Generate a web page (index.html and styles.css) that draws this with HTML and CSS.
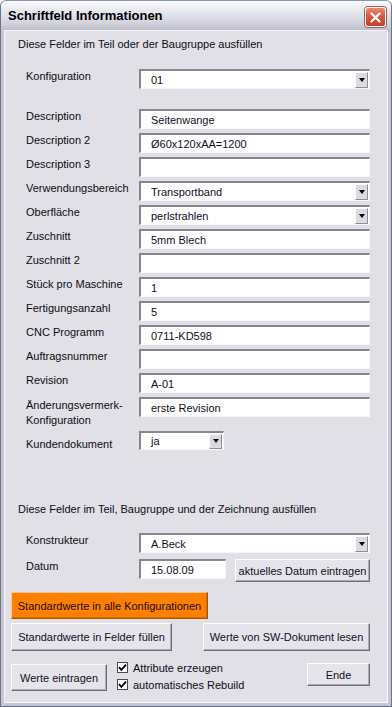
FILE: index.html
```html
<!DOCTYPE html>
<html lang="de">
<head>
  <meta charset="UTF-8" />
  <title>Schriftfeld Informationen</title>
  <link rel="stylesheet" href="styles.css">
</head>
<body>
  <div class="window">
    <!-- Title bar -->
    <div class="titlebar">
      <span class="title">Schriftfeld Informationen</span>
      <span class="close">
        <svg width="11" height="11" viewBox="0 0 11 11"><path d="M1.5 1.5 L9.5 9.5 M9.5 1.5 L1.5 9.5" stroke="#fff" stroke-width="2.2" stroke-linecap="round"/></svg>
      </span>
    </div>

    <div class="client">
      <p class="hint">Diese Felder im Teil oder der Baugruppe ausfüllen</p>

      <div class="row row-config">
        <span class="label">Konfiguration</span>
        <div class="field combo"><span class="val">01</span><span class="drop"></span></div>
      </div>

      <div class="fields">
        <div class="row"><span class="label">Description</span><div class="field"><span class="val">Seitenwange</span></div></div>
        <div class="row"><span class="label">Description 2</span><div class="field"><span class="val">Ø60x120xAA=1200</span></div></div>
        <div class="row"><span class="label">Description 3</span><div class="field"></div></div>
        <div class="row"><span class="label">Verwendungsbereich</span><div class="field combo"><span class="val">Transportband</span><span class="drop"></span></div></div>
        <div class="row"><span class="label">Oberfläche</span><div class="field combo"><span class="val">perlstrahlen</span><span class="drop"></span></div></div>
        <div class="row"><span class="label">Zuschnitt</span><div class="field"><span class="val">5mm Blech</span></div></div>
        <div class="row"><span class="label">Zuschnitt 2</span><div class="field"></div></div>
        <div class="row"><span class="label">Stück pro Maschine</span><div class="field"><span class="val">1</span></div></div>
        <div class="row"><span class="label">Fertigungsanzahl</span><div class="field"><span class="val">5</span></div></div>
        <div class="row"><span class="label">CNC Programm</span><div class="field"><span class="val">0711-KD598</span></div></div>
        <div class="row"><span class="label">Auftragsnummer</span><div class="field"></div></div>
        <div class="row"><span class="label">Revision</span><div class="field"><span class="val">A-01</span></div></div>
        <div class="row"><span class="label two-line">Änderungsvermerk-<br>Konfiguration</span><div class="field"><span class="val">erste Revision</span></div></div>
      </div>

      <div class="row row-kunde">
        <span class="label">Kundendokument</span>
        <div class="field combo small"><span class="val">ja</span><span class="drop"></span></div>
      </div>

      <p class="hint hint-2">Diese Felder im Teil, Baugruppe und der Zeichnung ausfüllen</p>

      <div class="row row-konstr">
        <span class="label">Konstrukteur</span>
        <div class="field combo"><span class="val">A.Beck</span><span class="drop"></span></div>
      </div>
      <div class="row row-datum">
        <span class="label">Datum</span>
        <div class="field date"><span class="val">15.08.09</span></div>
        <button class="btn btn-today">aktuelles Datum eintragen</button>
      </div>

      <div class="buttons">
        <button class="btn btn-orange">Standardwerte in alle Konfigurationen</button>
        <div class="btn-row">
          <button class="btn btn-fill">Standardwerte in Felder füllen</button>
          <button class="btn btn-read">Werte von SW-Dokument lesen</button>
        </div>
        <div class="btn-row last">
          <button class="btn btn-write">Werte eintragen</button>
          <div class="checks">
            <div class="check"><span class="box"><svg width="9" height="9" viewBox="0 0 9 9"><path d="M1 4.2 L3.4 6.8 L8 1.6" fill="none" stroke="#000" stroke-width="1.8"/></svg></span>Attribute erzeugen</div>
            <div class="check"><span class="box"><svg width="9" height="9" viewBox="0 0 9 9"><path d="M1 4.2 L3.4 6.8 L8 1.6" fill="none" stroke="#000" stroke-width="1.8"/></svg></span>automatisches Rebuild</div>
          </div>
          <button class="btn btn-end">Ende</button>
        </div>
      </div>
    </div>
  </div>
</body>
</html>
```

FILE: styles.css
```css
/* ─── XP silver style dialog ─────────────────────────── */
:root {
  --face: #e1e0e7;
  --frame: #c6c6d2;
  --dark: #6f6f78;
  --sunken: #85858e;
}
* { box-sizing: border-box; }
html, body { margin: 0; }
body {
  background: #fff;
  font-family: "Liberation Sans", Arial, sans-serif;
  font-size: 11px;
  color: #0c0c14;
}

.window {
  width: 392px;
  height: 707px;
  display: flex;
  flex-direction: column;
  background: var(--frame);
  border: 1px solid #6d7488;
  border-top-color: #8796bf;
  border-radius: 6px 6px 0 0;
  overflow: hidden;
}

/* ── Title bar ─────────────────────────────── */
.titlebar {
  height: 29px;
  flex: none;
  display: flex;
  align-items: center;
  padding: 0 5px 0 7px;
  background: linear-gradient(to bottom, #fbfbfd 0%, #efeff4 20%, #dedee8 55%, #cdcdd9 85%, #bdbdcb 100%);
}
.title {
  font-size: 13px;
  font-weight: bold;
  color: #000;
  flex: 1;
}
.close {
  width: 21px;
  height: 20px;
  margin-top: 3px;
  display: flex;
  align-items: center;
  justify-content: center;
  border: 1px solid #fff;
  border-radius: 3px;
  background: linear-gradient(to bottom, #ea8a74, #d4553c 55%, #c2412b);
  box-shadow: 0 0 0 1px #b65a4c;
}

/* ── Client area ─────────────────────────────── */
.client {
  flex: 1;
  margin: 0 3px 3px;
  background: var(--face);
  box-shadow: inset 1px 1px 0 #f6f6fa, inset -1px -1px 0 #fbfbfd;
  padding-top: 8px;
}

.hint {
  margin: 0 0 0 14px;
  line-height: 13px;
}
.hint-2 { margin-top: 52px; }

.row {
  display: flex;
  align-items: flex-start;
  margin-left: 22px;
}
.label {
  width: 113px;
  flex: none;
  padding-top: 1px;
  line-height: 13px;
}
.label.two-line { line-height: 15px; padding-bottom: 1px; }

.row-config { margin-top: 18px; }
.fields { margin-top: 20px; display: flex; flex-direction: column; gap: 4px; }
.row-kunde { margin-top: 2px; }
.row-kunde .label { padding-top: 7px; }
.row-konstr { margin-top: 17px; }
.row-datum { margin-top: 6px; }

/* sunken text field */
.field {
  width: 231px;
  height: 20px;
  display: flex;
  align-items: center;
  background: #fff;
  border-style: solid;
  border-width: 2px 1px 1px 2px;
  border-color: var(--sunken) #f7f7f7 #f7f7f7 var(--sunken);
  padding-left: 10px;
  color: #10101c;
}
.field .val { flex: 1; white-space: nowrap; }
.field.small { width: 85px; height: 19px; }
.field.date { width: 87px; }

.drop {
  width: 13px;
  height: 16px;
  flex: none;
  margin-right: 1px;
  display: flex;
  align-items: center;
  justify-content: center;
  background: #dcdbe3;
  border: 1px solid;
  border-color: #fbfbfd #8e8e98 #8e8e98 #fbfbfd;
}
.drop::after {
  content: "";
  border-left: 3.5px solid transparent;
  border-right: 3.5px solid transparent;
  border-top: 4px solid #000;
}
.field.small .drop { height: 15px; }

/* raised button */
.btn {
  font-family: inherit;
  font-size: 11px;
  color: #10101c;
  padding: 0;
  display: flex;
  align-items: center;
  justify-content: center;
  background: #e5e4eb;
  border: 1px solid;
  border-color: #fdfdfe var(--dark) var(--dark) #fdfdfe;
  box-shadow: inset -1px -1px 0 #a9a9b3;
  white-space: nowrap;
}
.btn-today { width: 135px; height: 23px; margin-left: 9px; }

.buttons {
  margin: 10px 0 0 7px;
  display: flex;
  flex-direction: column;
}
.btn-orange {
  width: 197px;
  height: 27px;
  background: #ff8000;
  border-color: #ffc78f #a85400 #a85400 #ffc78f;
  box-shadow: inset -1px -1px 0 #d96c00;
  color: #1a0c00;
}
.btn-row {
  display: flex;
  align-items: flex-start;
  margin-top: 4px;
}
.btn-fill { width: 161px; height: 28px; }
.btn-read { width: 167px; height: 28px; margin-left: 31px; }

.btn-row.last { margin-top: 13px; }
.btn-write { width: 96px; height: 27px; }
.checks {
  margin: -5px 0 0 10px;
  display: flex;
  flex-direction: column;
}
.check {
  height: 17px;
  display: flex;
  align-items: center;
  gap: 5px;
}
.box {
  width: 11px;
  height: 11px;
  display: flex;
  align-items: center;
  justify-content: center;
  background: #fff;
  border: 1px solid #4a4a55;
}
.btn-end { width: 63px; height: 23px; margin: -1px 18px 0 auto; }
```
